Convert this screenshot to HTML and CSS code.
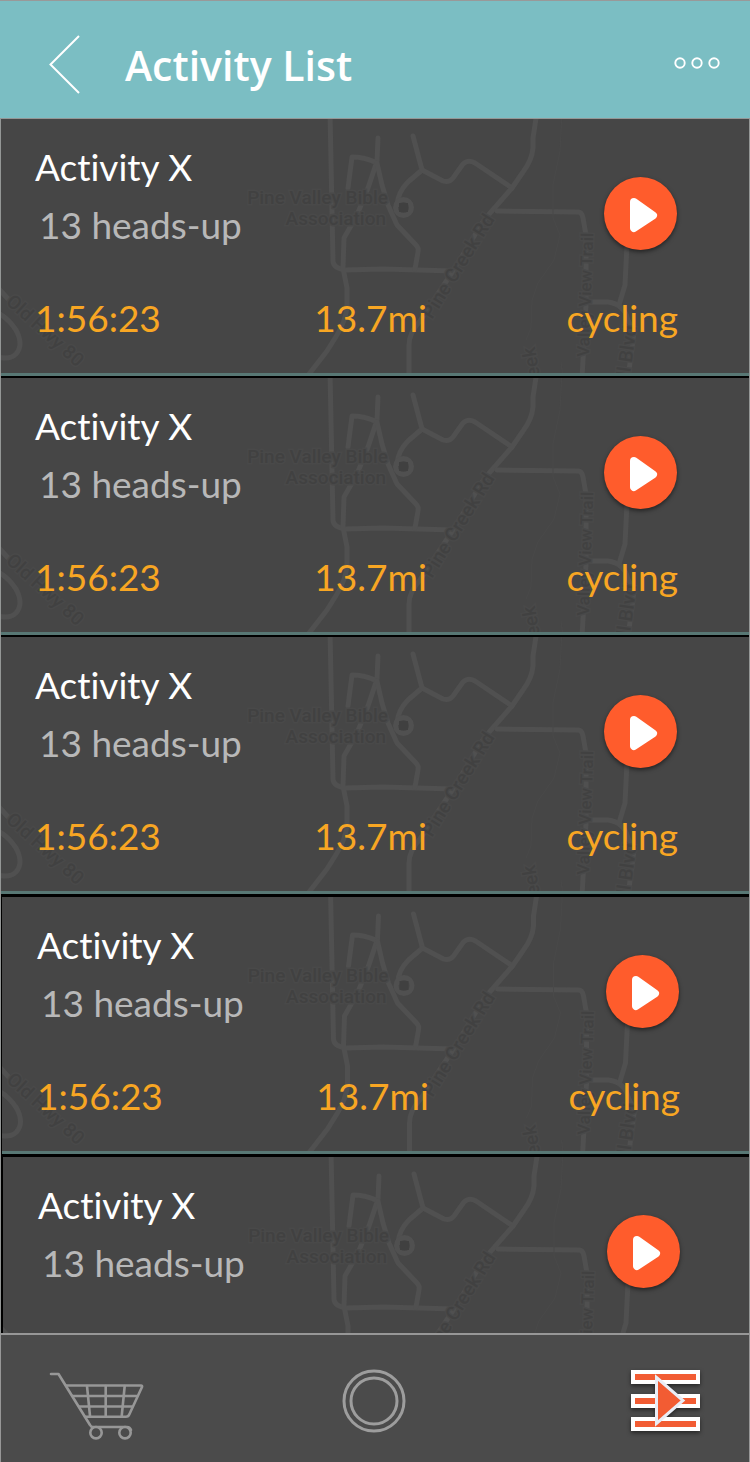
FILE: index.html
```html
<!DOCTYPE html>
<html lang="en">
<head>
<meta charset="utf-8">
<meta name="viewport" content="width=device-width, initial-scale=1">
<title>Activity List</title>
<link rel="stylesheet" href="styles.css">
</head>
<body>
<svg class="defs" aria-hidden="true">
  <symbol id="map" viewBox="1 119 748 254" preserveAspectRatio="xMidYMin slice">
    <g class="roads">
      <path d="M330 112L333 261Q333 268 345 270L383 269L453 271"/>
      <path d="M378 138L377 161L368 188L357 215L344 238L343 268L347 288V308Q345 322 337 335L327 351L306 378"/>
      <path d="M348 188L352 157Q364 157 375 162"/>
      <path d="M377 163L382 185L388 205L397 225L416 245Q419 248 418 252L415 269"/>
      <path d="M413 136L422 170L408 182Q398 192 397 205"/>
      <path d="M422 170L443 181Q449 183 453 178L463 164Q468 159 475 163L512 188"/>
      <path d="M537 112L533 138V148Q532 160 523 172L512 188L484 220L453 271L420 321Q409 333 409 345V378"/>
      <path d="M497 211L578 212Q582 212 583 218L586 235V305L582 378"/>
      <path d="M587 302L608 302Q624 304 628 320L634 332L628 378"/>
      <path d="M627 245L625 285L619 305"/>
      <path d="M-2 288L10 301M-2 313Q8 318 16 330Q24 345 16 354Q10 360 -2 357"/>
    </g>
    <path class="creek" d="M562 112L560 151L553 185V218L560 235L554 260L538 283L532 300L531 328L526 340M537 362V378M561 362L563 378"/>
    <circle class="pin" cx="403.500" cy="207.500" r="8"/>
    <path class="pin-core" d="M399 203H408V212H399Z"/>
    <g class="places">
      <text x="388" y="204" text-anchor="end">Pine Valley Bible</text>
      <text x="386" y="225" text-anchor="end">Association</text>
      <text transform="translate(5 303) rotate(42)">Old Hwy 80</text>
      <text transform="translate(432 320) rotate(-58)">Pine Creek Rd</text>
      <text class="small" transform="translate(589 357) rotate(-88)">Valley View Trail</text>
      <text transform="translate(629 382) rotate(-82)">ill Blvd</text>
      <text transform="translate(540 376) rotate(-100)">eek</text>
    </g>
  </symbol>
  <symbol id="play" viewBox="0 0 73 73">
    <path d="M30 25L49 38.500L30 51Z" fill="#fff" stroke="#fff" stroke-width="8" stroke-linejoin="round"/>
  </symbol>
</svg>
<div class="app">
  <header class="bar">
    <button class="icon-button" type="button" aria-label="Back">
      <svg width="32" height="60" viewBox="0 0 32 60"><path d="M31 1L2.500 29.500L31 58" fill="none" stroke="#fff" stroke-width="2"/></svg>
    </button>
    <h1 class="title">Activity List</h1>
    <button class="icon-button more" type="button" aria-label="More options">
      <svg width="46" height="12" viewBox="0 0 46 12"><g fill="none" stroke="#fff" stroke-width="1.900"><circle cx="6" cy="6" r="4.700"/><circle cx="23" cy="6" r="4.700"/><circle cx="40" cy="6" r="4.700"/></g></svg>
    </button>
  </header>
  <main class="list-area">
    <ul class="list">
      <li class="card">
        <svg class="map" aria-hidden="true"><use href="#map"/></svg>
        <div class="summary">
          <div><h2 class="name">Activity X</h2><p class="alerts">13 heads-up</p></div>
          <button class="play" type="button" aria-label="Play Activity X"><svg class="play-icon"><use href="#play"/></svg></button>
        </div>
        <div class="metrics"><span>1:56:23</span><span>13.7mi</span><span>cycling</span></div>
      </li>
      <li class="card">
        <svg class="map" aria-hidden="true"><use href="#map"/></svg>
        <div class="summary">
          <div><h2 class="name">Activity X</h2><p class="alerts">13 heads-up</p></div>
          <button class="play" type="button" aria-label="Play Activity X"><svg class="play-icon"><use href="#play"/></svg></button>
        </div>
        <div class="metrics"><span>1:56:23</span><span>13.7mi</span><span>cycling</span></div>
      </li>
      <li class="card">
        <svg class="map" aria-hidden="true"><use href="#map"/></svg>
        <div class="summary">
          <div><h2 class="name">Activity X</h2><p class="alerts">13 heads-up</p></div>
          <button class="play" type="button" aria-label="Play Activity X"><svg class="play-icon"><use href="#play"/></svg></button>
        </div>
        <div class="metrics"><span>1:56:23</span><span>13.7mi</span><span>cycling</span></div>
      </li>
      <li class="card inset">
        <svg class="map" aria-hidden="true"><use href="#map"/></svg>
        <div class="summary">
          <div><h2 class="name">Activity X</h2><p class="alerts">13 heads-up</p></div>
          <button class="play" type="button" aria-label="Play Activity X"><svg class="play-icon"><use href="#play"/></svg></button>
        </div>
        <div class="metrics"><span>1:56:23</span><span>13.7mi</span><span>cycling</span></div>
      </li>
      <li class="card inset inset-deep">
        <svg class="map" aria-hidden="true"><use href="#map"/></svg>
        <div class="summary">
          <div><h2 class="name">Activity X</h2><p class="alerts">13 heads-up</p></div>
          <button class="play" type="button" aria-label="Play Activity X"><svg class="play-icon"><use href="#play"/></svg></button>
        </div>
        <div class="metrics"><span>1:56:23</span><span>13.7mi</span><span>cycling</span></div>
      </li>
    </ul>
  </main>
  <nav class="tabs" aria-label="Main">
    <button class="icon-button" type="button" aria-label="Shop">
      <svg width="96" height="77" viewBox="49 1363 96 77"><g fill="none" stroke="#979797" stroke-width="2.600" stroke-linecap="round" stroke-linejoin="round"><path d="M51 1374H58.500L90 1425Q91 1427 93 1427H127Q130 1427 131 1430"/><path d="M66 1385.500H141Q142.500 1385.500 142 1387L129.500 1414Q128.500 1416.700 126 1416.700H85"/><path d="M72.500 1396H137M79 1406.500H132M87 1386L90 1416M105.700 1386V1416M124.700 1386L121.700 1416"/><circle cx="96" cy="1432.700" r="5.700" fill="#4b4b4b"/><circle cx="125" cy="1432.700" r="5.700" fill="#4b4b4b"/></g></svg>
    </button>
    <button class="icon-button" type="button" aria-label="Record">
      <svg width="64" height="64" viewBox="0 0 64 64"><g fill="none" stroke="#9d9d9d" stroke-width="3"><circle cx="32" cy="32" r="30"/><circle cx="32" cy="32" r="23"/></g></svg>
    </button>
    <button class="icon-button" type="button" aria-label="Activities" aria-current="page">
      <svg class="activities" width="69" height="62" viewBox="0 0 69 62"><g fill="#fff"><path d="M0 0H69V14H0ZM0 24H69V38H0ZM0 47H69V61H0Z"/></g><path fill="#f25c33" d="M4 4H65V10H4ZM4 28H65V34H4ZM4 51H65V57H4Z"/><path d="M25.500 7.500L52 30.500L25.500 53.500Z" fill="#f25c33" stroke="#e9edf6" stroke-width="3"/></svg>
    </button>
  </nav>
</div>
</body>
</html>
```
FILE: styles.css
```css
* { box-sizing: border-box; }
body { margin: 0; background: #000; font-family: Lato, "Open Sans", sans-serif; }
h1, h2, p, ul { margin: 0; padding: 0; }
button { border: 0; padding: 0; background: none; font: inherit; cursor: pointer; }
svg { display: block; }
.defs { position: absolute; width: 0; height: 0; }
.app { display: flex; flex-direction: column; height: 100vh; }

.bar {
  display: flex; align-items: center; flex: none;
  height: 119px; padding: 10px 30px 0 48px;
  background: #7bbec3;
  border-top: 1px solid #999; border-bottom: 1px solid #949796;
}
.title { flex: 1; margin-left: 45px; color: #fff; font: 600 41px/58px "Open Sans", sans-serif; }
.more { padding-bottom: 4px; }

.list-area { flex: 1; min-height: 0; overflow-y: auto; scrollbar-width: none; background: #000; border: solid #949796; border-width: 0 1px; }
.list { list-style: none; }
.card {
  position: relative; height: 257px; margin-bottom: 2px; padding: 26px 71px 0 34px;
  overflow: hidden; background: #464646; border-bottom: 3px solid #587774;
  font-size: 37px; line-height: 44px; font-variant-ligatures: none;
}
.inset { margin: 3px 0 3px 1px; padding-right: 69px; padding-left: 35px; }
.inset-deep { margin-left: 2px; padding-right: 68px; }
.map { position: absolute; top: 0; left: 0; width: 100%; height: 254px; }
.summary { position: relative; display: flex; justify-content: space-between; }
.name { color: #fff; font-size: 37px; font-weight: 400; }
.alerts { margin-top: 14px; padding-left: 4px; color: #b8b8b8; }
.play { width: 73px; height: 73px; margin: 32px 1px 0 0; border-radius: 50%; background: #ff5c2c; box-shadow: 0 2px 4px rgba(0, 0, 0, .5); }
.play-icon { width: 73px; height: 73px; }
.metrics {
  position: relative; display: grid; grid-template-columns: 278fr 251fr auto;
  margin-top: 46px; color: #f8a623;
}

.roads { fill: none; stroke: #505050; stroke-width: 5; stroke-linecap: round; stroke-linejoin: round; }
.creek { fill: none; stroke: #494949; stroke-width: 1; }
.pin { fill: none; stroke: #505050; stroke-width: 5; }
.pin-core { fill: #404040; }
.places { fill: #414141; stroke: #494949; stroke-width: 3; paint-order: stroke; font: 500 19px Roboto, sans-serif; }
.small { font-size: 17px; }

.tabs {
  display: grid; grid-template-columns: 1fr auto 1fr; align-items: center; flex: none;
  height: 129px; padding: 5px 49px 0 46px;
  background: #4b4b4b; border: solid #979797; border-width: 2px 1px 0;
}
.tabs > :last-child { justify-self: end; }
.tabs > :first-child { justify-self: start; margin-left: 2px; }
.activities { filter: drop-shadow(0 2px 2px rgba(0, 0, 0, .5)); overflow: visible; }
```
